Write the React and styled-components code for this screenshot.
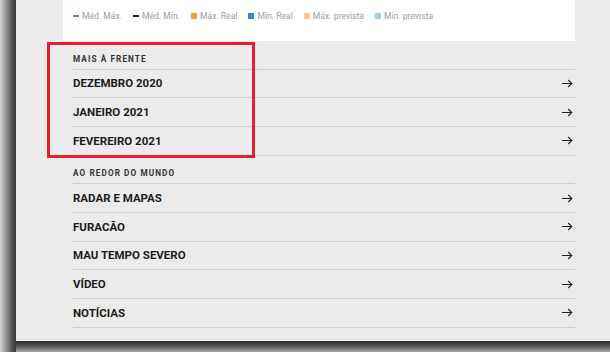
import React from "react";
import styled, { createGlobalStyle } from "styled-components";

const GlobalStyle = createGlobalStyle`
  html, body {
    margin: 0;
    padding: 0;
    width: 610px;
    height: 352px;
    overflow: hidden;
    background: #9a9a9a;
  }
  * { box-sizing: border-box; }
`;

const legend = [
  { id: "medmax", label: "Méd. Máx.", color: "#e2603a", kind: "dash" },
  { id: "medmin", label: "Méd. Mín.", color: "#1d1b5a", kind: "dash" },
  { id: "maxreal", label: "Máx. Real", color: "#f59a3c", kind: "box" },
  { id: "minreal", label: "Mín. Real", color: "#2f8fd0", kind: "box" },
  { id: "maxprev", label: "Máx. prevista", color: "#fbc79c", kind: "box" },
  { id: "minprev", label: "Mín. prevista", color: "#9fcbe8", kind: "box" },
];

const sections = [
  {
    id: "ahead",
    title: "MAIS À FRENTE",
    entries: ["DEZEMBRO 2020", "JANEIRO 2021", "FEVEREIRO 2021"],
  },
  {
    id: "world",
    title: "AO REDOR DO MUNDO",
    entries: ["RADAR E MAPAS", "FURACÃO", "MAU TEMPO SEVERO", "VÍDEO", "NOTÍCIAS"],
  },
];

const Frame = styled.div`
  display: grid;
  grid-template-columns: 16px 1fr;
  grid-template-rows: 340px 12px;
  width: 610px;
  height: 352px;
`;

const LeftEdge = styled.div`
  grid-row: 1 / 3;
  background: linear-gradient(to right, #d4d4d4 0%, #9a9a9a 35%, #4a4a4a 80%, #3a3a3a 100%);
`;

const BottomEdge = styled.div`
  border-top: 1px solid #f4f4f4;
  background: linear-gradient(to bottom, #2a2a2a 0%, #555 45%, #a8a8a8 100%);
`;

const Panel = styled.main`
  position: relative;
  background: #ebebeb;
  padding-left: 47px;
  font-family: Roboto, "Liberation Sans", sans-serif;
`;

const Column = styled.div`
  width: 512px;
`;

const Card = styled.div`
  height: 41px;
  background: #fff;
  display: flex;
  align-items: center;
  gap: 11px;
  padding: 0 0 9px 10px;
`;

const LegendItem = styled.div`
  display: flex;
  align-items: center;
  gap: 3px;
  font-family: Roboto, "Liberation Sans", sans-serif;
  font-size: 8.6px;
  color: #9c9c9c;
`;

const Marker = styled.span`
  width: 6px;
  height: ${(p) => (p.kind === "dash" ? "2px" : "6px")};
  background: ${(p) => p.color};
`;

const List = styled.div`
  padding-left: 10px;
`;

const Heading = styled.div`
  height: 28.67px;
  display: flex;
  align-items: flex-end;
  padding-bottom: 5px;
  border-bottom: 1px solid #cfcfcf;
  font-size: 8.2px;
  font-weight: 700;
  letter-spacing: 1.1px;
  color: #333;
`;

const Row = styled.div`
  height: 28.67px;
  display: flex;
  align-items: center;
  justify-content: space-between;
  padding-right: 2px;
  border-bottom: 1px solid #cfcfcf;
  font-size: 11.5px;
  font-weight: 700;
  color: #1b1b1b;
`;

const Highlight = styled.div`
  position: absolute;
  left: 31px;
  top: 42px;
  width: 208px;
  height: 116px;
  border: 3px solid #e21f2b;
  pointer-events: none;
`;

const Arrow = () => (
  <svg width="11" height="9" viewBox="0 0 11 9">
    <path d="M0 4.5h10M6.2 1l3.6 3.5L6.2 8" fill="none" stroke="#222" strokeWidth="1.1" />
  </svg>
);

export default function App() {
  return (
    <Frame>
      <GlobalStyle />
      <LeftEdge />
      <Panel>
        <Column>
          <Card>
            {legend.map((item) => (
              <LegendItem key={item.id}>
                <Marker kind={item.kind} color={item.color} />
                {item.label}
              </LegendItem>
            ))}
          </Card>
          <List>
            {sections.map((section) => (
              <section key={section.id}>
                <Heading>{section.title}</Heading>
                {section.entries.map((entry) => (
                  <Row key={entry}>
                    {entry}
                    <Arrow />
                  </Row>
                ))}
              </section>
            ))}
          </List>
        </Column>
        <Highlight />
      </Panel>
      <BottomEdge />
    </Frame>
  );
}
